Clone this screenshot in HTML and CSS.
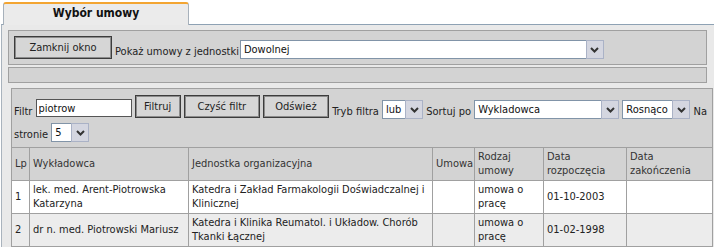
FILE: index.html
```html
<!DOCTYPE html>
<html lang="pl">
<head>
    <meta charset="UTF-8">
    <title>Wybór umowy</title>
    <link rel="stylesheet" href="styles.css">
</head>
<body>
    <!-- zakładka -->
    <div class="tabs">
        <div class="tab">Wybór umowy</div>
    </div>

    <div class="panel">
        <!-- górny pasek -->
        <div class="box top-box">
            <button class="btn btn-close">Zamknij okno</button>
            <span class="label">Pokaż umowy z jednostki</span>
            <span class="combo combo-unit">
                <span class="combo-text">Dowolnej</span>
                <span class="combo-btn"><svg width="9" height="6" viewBox="0 0 9 6"><path d="M1 1 L4.5 4.5 L8 1" fill="none" stroke="#333" stroke-width="2"/></svg></span>
            </span>
        </div>

        <div class="box empty-box"></div>

        <!-- lista umów -->
        <div class="box list-box">
            <div class="filters">
                <span class="label">Filtr</span>
                <input class="text-input" type="text" value="piotrow">
                <button class="btn btn-filter">Filtruj</button>
                <button class="btn btn-clear">Czyść filtr</button>
                <button class="btn btn-refresh">Odśwież</button>
                <span class="label">Tryb filtra</span>
                <span class="combo combo-mode">
                    <span class="combo-text">lub</span>
                    <span class="combo-btn"><svg width="9" height="6" viewBox="0 0 9 6"><path d="M1 1 L4.5 4.5 L8 1" fill="none" stroke="#333" stroke-width="2"/></svg></span>
                </span>
                <span class="label">Sortuj po</span>
                <span class="combo combo-sort">
                    <span class="combo-text">Wykladowca</span>
                    <span class="combo-btn"><svg width="9" height="6" viewBox="0 0 9 6"><path d="M1 1 L4.5 4.5 L8 1" fill="none" stroke="#333" stroke-width="2"/></svg></span>
                </span>
                <span class="combo combo-order">
                    <span class="combo-text">Rosnąco</span>
                    <span class="combo-btn"><svg width="9" height="6" viewBox="0 0 9 6"><path d="M1 1 L4.5 4.5 L8 1" fill="none" stroke="#333" stroke-width="2"/></svg></span>
                </span>
                <span class="label">Na stronie</span>
                <span class="combo combo-page">
                    <span class="combo-text">5</span>
                    <span class="combo-btn"><svg width="9" height="6" viewBox="0 0 9 6"><path d="M1 1 L4.5 4.5 L8 1" fill="none" stroke="#333" stroke-width="2"/></svg></span>
                </span>
            </div>

            <table class="grid">
                <colgroup>
                    <col style="width: 18px">
                    <col style="width: 159px">
                    <col style="width: 244px">
                    <col style="width: 42px">
                    <col style="width: 69px">
                    <col style="width: 83px">
                    <col>
                </colgroup>
                <tr class="head">
                    <th>Lp</th>
                    <th>Wykładowca</th>
                    <th>Jednostka organizacyjna</th>
                    <th>Umowa</th>
                    <th>Rodzaj umowy</th>
                    <th>Data rozpoczęcia</th>
                    <th>Data zakończenia</th>
                </tr>
                <tr>
                    <td>1</td>
                    <td>lek. med. Arent-Piotrowska Katarzyna</td>
                    <td>Katedra i Zakład Farmakologii Doświadczalnej i Klinicznej</td>
                    <td></td>
                    <td>umowa o pracę</td>
                    <td>01-10-2003</td>
                    <td></td>
                </tr>
                <tr class="alt">
                    <td>2</td>
                    <td>dr n. med. Piotrowski Mariusz</td>
                    <td>Katedra i Klinika Reumatol. i Układow. Chorób Tkanki Łącznej</td>
                    <td></td>
                    <td>umowa o pracę</td>
                    <td>01-02-1998</td>
                    <td></td>
                </tr>
            </table>
        </div>
    </div>
</body>
</html>
```

FILE: styles.css
```css
body {
    margin: 0;
    background-color: white;
    font-family: "DejaVu Sans Condensed", Tahoma, "Liberation Sans", sans-serif;
    font-size: 11px;
    color: #222;
    overflow: hidden;
}
/* zakładka */
.tabs {
    padding: 2px 0 0 3px;
    height: 22px;
}
.tab {
    position: relative;
    width: 184px;
    height: 21px;
    line-height: 19px;
    text-align: center;
    font-weight: bold;
    font-size: 12px;
    color: #111;
    background-color: #ebebeb;
    border: 1px solid #a7b1bb;
    border-top: 2px solid #f3a532;
    border-bottom: none;
    border-radius: 3px 3px 0 0;
    z-index: 1;
}
.panel {
    margin-left: 1px;
    background-color: #e9e9e9;
    border-top: 1px solid #8ea2b4;
    border-left: 1px solid #a9b3bd;
    padding-top: 5px;
}
.box {
    background-color: #d3d3d3;
    border: 1px solid #a0a0a0;
}
.top-box {
    display: flex;
    align-items: flex-end;
    margin: 0 7px 0 6px;
    padding: 5px;
}
.top-box .label {
    margin: 0 1px 0 3px;
    line-height: 14px;
}
.empty-box {
    margin: 2px 7px 0 6px;
    height: 14px;
}
.list-box {
    margin: 5px 1px 0 9px;
    border-bottom: none;
}
/* przyciski */
.btn {
    font-family: inherit;
    font-size: 11px;
    color: #222;
    height: 23px;
    padding: 0;
    background-color: #d6d6d6;
    border: 1px solid #3c3c3c;
    box-shadow: inset 0 0 0 1px #8c8c8c;
    cursor: pointer;
}
.btn-close { width: 98px; }
.btn-filter { width: 46px; }
.btn-clear { width: 76px; }
.btn-refresh { width: 66px; }
/* listy rozwijane */
.combo {
    display: inline-flex;
    height: 19px;
    background-color: white;
    border: 1px solid #8194a8;
    box-sizing: border-box;
}
.combo-text {
    flex: 1;
    padding-left: 3px;
    line-height: 17px;
    color: #111;
    white-space: nowrap;
    overflow: hidden;
}
.combo-btn {
    width: 16px;
    display: flex;
    align-items: center;
    justify-content: center;
    background-color: #d4d6e0;
    border: 1px solid #aab2c6;
    margin: -1px -1px -1px 0;
}
.combo-unit { width: 364px; }
.combo-mode { width: 41px; }
.combo-sort { width: 145px; }
.combo-order { width: 68px; }
.combo-page { width: 38px; }
/* filtr */
.filters {
    padding: 6px 0 5px 2px;
    line-height: 14px;
}
.filters > * {
    vertical-align: bottom;
}
.filters .btn {
    margin-bottom: 1px;
}
.filters .combo {
    margin-top: 4px;
}
.text-input {
    width: 96px;
    height: 18px;
    box-sizing: border-box;
    margin-bottom: 2px;
    padding: 0 2px;
    font-family: inherit;
    font-size: 11px;
    color: #111;
    border: 1px solid #555;
    background-color: white;
}
/* tabela */
.grid {
    width: calc(100% + 2px);
    margin: 0 -1px;
    border-collapse: collapse;
    table-layout: fixed;
}
.grid th, .grid td {
    border: 1px solid #a0a0a0;
    padding: 1px 3px;
    line-height: 14px;
    text-align: left;
    vertical-align: middle;
    font-weight: normal;
}
.grid tr {
    height: 33px;
}
.grid th {
    color: #333;
    background-color: #d3d3d3;
}
.grid td {
    background-color: white;
}
.grid .alt td {
    background-color: #ececec;
}
```
